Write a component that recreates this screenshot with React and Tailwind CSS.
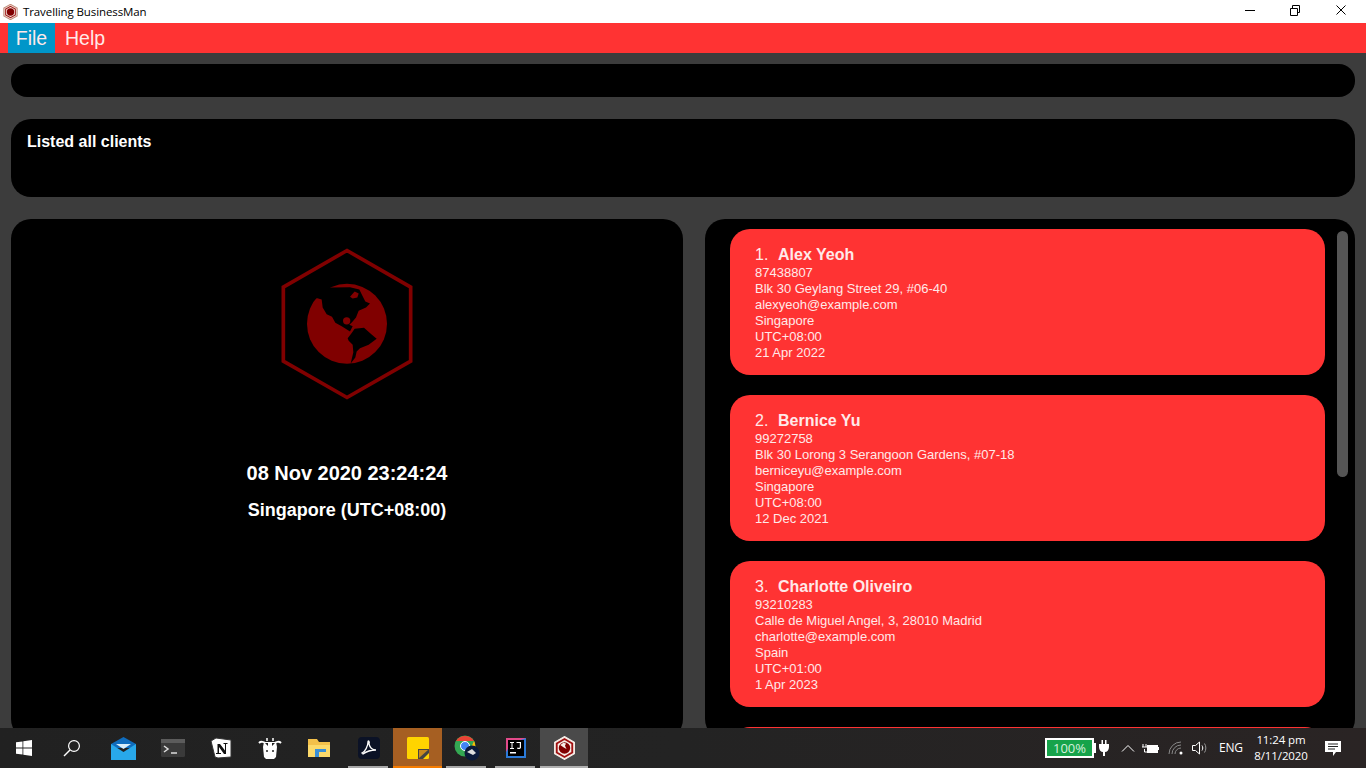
const sans = { fontFamily: '"Liberation Sans", Arial, sans-serif' };

const clients = [
  { n: 1, name: "Alex Yeoh", lines: ["87438807", "Blk 30 Geylang Street 29, #06-40", "alexyeoh@example.com", "Singapore", "UTC+08:00", "21 Apr 2022"] },
  { n: 2, name: "Bernice Yu", lines: ["99272758", "Blk 30 Lorong 3 Serangoon Gardens, #07-18", "berniceyu@example.com", "Singapore", "UTC+08:00", "12 Dec 2021"] },
  { n: 3, name: "Charlotte Oliveiro", lines: ["93210283", "Calle de Miguel Angel, 3, 28010 Madrid", "charlotte@example.com", "Spain", "UTC+01:00", "1 Apr 2023"] },
];

function Globe({ color = "#800000", land = "#000", className }) {
  return (
    <svg viewBox="60 37 402 461" className={className}>
      <polygon points="261,47 452,157 452,379 261,488 70,379 70,157" fill="none" stroke={color} strokeWidth="11" />
      <circle cx="261" cy="267" r="120" fill={color} />
      <path fill={land} d="M160,190 L172,190 L185,194 L188,218 L200,238 L216,246 L226,264 L245,274 L270,290 L278,274 L268,270 L276,262 L288,248 L296,228 L318,218 L330,206 L316,200 L308,184 L298,164 L270,157 L212,158 L190,160 Z" />
      <circle cx="260" cy="258" r="11" fill={color} />
      <path fill={color} d="M270,186 L284,170 L296,176 L292,188 L278,191 Z" />
      <path fill={land} d="M263,310 L274,296 L284,282 L312,279 L334,298 L350,312 L326,330 L300,340 L290,350 L286,368 L272,386 L280,352 L278,330 L266,318 Z" />
    </svg>
  );
}

function Slot({ children, className = "", bar = "" }) {
  return (
    <div className={`relative w-[49px] h-10 flex items-center justify-center shrink-0 ${className}`}>
      {children}
      {bar && <div className={`absolute bottom-0 h-0.5 ${bar}`} />}
    </div>
  );
}

function Card({ c }) {
  return (
    <div className="shrink-0 h-[146px] w-[595px] rounded-[20px] bg-[#ff3333] pl-[25px] pt-[16px] text-[#ffe9e9]">
      <div className="flex items-baseline h-[20px] text-[16px] leading-[19px]">
        <span className="w-[23px]">{c.n}.</span>
        <span className="font-bold">{c.name}</span>
      </div>
      {c.lines.map((l) => (
        <div key={l} className="text-[13px] leading-[16px]">{l}</div>
      ))}
    </div>
  );
}

export default function App() {
  return (
    <div className="w-[1366px] h-[768px] flex flex-col overflow-hidden bg-[#3c3c3c]" style={sans}>
      {/* Title bar */}
      <div className="h-[23px] bg-white flex items-center shrink-0 text-black">
        <div className="w-[23px] flex pl-[3px]">
          <svg viewBox="60 37 402 461" className="w-[15px] h-[16px]">
            <polygon points="261,47 452,157 452,379 261,488 70,379 70,157" fill="#f4e4dc" stroke="#c08a78" strokeWidth="30" />
            <polygon points="261,105 400,185 400,350 261,430 122,350 122,185" fill="#f4e4dc" stroke="#a01818" strokeWidth="30" />
            <circle cx="261" cy="267" r="105" fill="#800000" />
          </svg>
        </div>
        <span className="text-[11.5px] tracking-[-0.1px]" style={{ fontFamily: '"Open Sans", sans-serif' }}>Travelling BusinessMan</span>
        <div className="ml-auto flex items-center h-full">
          <svg width="38" height="23" viewBox="0 0 38 23"><path d="M5 10.500h10" stroke="#000" /></svg>
          <svg width="45" height="23" viewBox="0 0 45 23" fill="none" stroke="#000"><path d="M12.500 8.500h7v7h-7zM14.500 8.500v-3h7v7h-2" /></svg>
          <svg width="43" height="23" viewBox="0 0 43 23" fill="none" stroke="#000"><path d="M13.500 5.500l9 9M22.500 5.500l-9 9" /></svg>
        </div>
      </div>

      {/* Menu bar */}
      <div className="h-[30px] bg-[#ff3333] flex shrink-0 pl-2 text-[19.5px] text-[#ffe9e9]">
        <div className="w-[47px] bg-[#0096c9] flex items-center justify-center pt-px">File</div>
        <div className="px-[10px] flex items-center pt-px">Help</div>
      </div>

      {/* Main */}
      <div className="flex-1 min-h-0 overflow-hidden px-[11px] pt-[11px] flex flex-col">
        <div className="h-[33px] shrink-0 rounded-[16px] bg-black" />
        <div className="h-[78px] shrink-0 mt-[22px] rounded-[20px] bg-black px-4 pt-[13px] text-white font-bold text-[16px] leading-[20px]">
          Listed all clients
        </div>
        <div className="mt-[22px] flex gap-[22px] shrink-0 h-[520px]">
          <div className="w-[672px] rounded-[20px] bg-black flex flex-col items-center pt-[28px] text-white font-bold">
            <Globe className="w-[134px] h-[154px]" />
            <div className="mt-[60px] text-[20px] leading-[24px] tracking-[-0.02px]">08 Nov 2020 23:24:24</div>
            <div className="mt-[14px] text-[18px] leading-[22px]">Singapore (UTC+08:00)</div>
          </div>
          <div className="relative w-[650px] rounded-[20px] bg-black overflow-hidden pl-[25px] pt-[10px] flex flex-col gap-[20px]">
            {clients.map((c) => <Card key={c.n} c={c} />)}
            <div className="shrink-0 h-[146px] w-[595px] rounded-[20px] bg-[#ff3333]" />
            <div className="absolute left-[632px] top-[12px] w-[11px] h-[246px] rounded-md bg-[#555555]" />
          </div>
        </div>
      </div>

      {/* Taskbar */}
      <div className="h-10 shrink-0 bg-gradient-to-r from-[#212121] via-[#232323] to-[#2a2424] flex items-center relative z-10 text-white">
        <div className="w-12 h-10 flex items-center justify-center">
          <svg width="16" height="16" viewBox="0 0 16 16" fill="#fff"><path d="M0 2.300l6.500-.9v6.200H0zM7.300 1.300L16 0v7.600H7.300zM0 8.400h6.500v6.200L0 13.700zM7.300 8.400H16V16l-8.700-1.300z" /></svg>
        </div>
        <div className="w-12 h-10 flex items-center justify-center mr-[3px]">
          <svg width="18" height="18" viewBox="0 0 18 18" fill="none" stroke="#fff" strokeWidth="1.200"><circle cx="11" cy="7" r="5.400" /><path d="M7 11l-6 6" strokeWidth="1.500" /></svg>
        </div>
        <Slot>
          <svg width="25" height="23" viewBox="0 0 25 23"><path d="M0 7L12.500 0 25 7v4H0z" fill="#0f6cbd" /><path d="M0 7l12.500 8L25 7v16H0z" fill="#28a8ea" /><path d="M5 7h15l-7.500 5z" fill="#d8edf9" /></svg>
        </Slot>
        <Slot>
          <svg width="24" height="18" viewBox="0 0 24 18"><rect width="24" height="18" rx="1.500" fill="#3a3a3a" /><rect width="24" height="4" fill="#5c5c5c" /><path d="M3 7l4 3-4 3" stroke="#ddd" strokeWidth="1.500" fill="none" /><path d="M10 14h6" stroke="#ddd" strokeWidth="1.500" /></svg>
        </Slot>
        <Slot className="pr-[2px]">
          <svg width="22" height="22" viewBox="0 0 22 22"><path d="M1 4l4 16 3 1 13-1V3L6 1z" fill="#fff" stroke="#333" /><path d="M7 7h3l5 6.500V7h-1.500V6h4v1H16v10h-2L9 10v6h2v1H6v-1h1.500V7H7z" fill="#111" /></svg>
        </Slot>
        <Slot className="pr-[2px]">
          <svg width="24" height="24" viewBox="0 0 24 24"><path d="M1 7c2-2 5-1 6 0M23 7c-2-2-5-1-6 0" stroke="#fff" strokeWidth="2" fill="none" /><path d="M9 2v3M15 2v3" stroke="#fff" strokeWidth="1.500" /><path d="M6 6h12l1 5-1 10-2 2H8l-2-2-1-10z" fill="#fff" /><circle cx="9" cy="15" r="1" fill="#222" /><circle cx="15" cy="15" r="1" fill="#222" /><path d="M7 7l3 0 0 3zM17 7l-3 0 0 3z" fill="#222" /></svg>
        </Slot>
        <Slot className="pr-[2px]">
          <svg width="22" height="20" viewBox="0 0 22 20"><path d="M0 1h9l2 3h11v15H0z" fill="#f3c04a" /><path d="M0 7h22v12H0z" fill="#fcd96a" /><path d="M7 19v-8h11v3h-7v5z" fill="#3a8fd6" /></svg>
        </Slot>
        <Slot bar="left-[4px] w-[40px] bg-[#a8a8a8]">
          <svg width="22" height="22" viewBox="0 0 22 22"><rect width="22" height="22" rx="4" fill="#0b1226" /><path d="M4 16c3-1 6-7 6-11 0-2 2-1 1 2 1 4 3 6 7 6-4 0-9 1-13 4z" fill="none" stroke="#fff" strokeWidth="1.300" /></svg>
        </Slot>
        <Slot className="bg-[#a65f22]" bar="left-0 w-full bg-[#f57c00]">
          <svg width="22" height="22" viewBox="0 0 22 22"><rect width="22" height="22" rx="1.500" fill="#ffd400" /><path d="M11 22V12h11v4l-6 6z" fill="#444" /><path d="M12 21v-8h9z" fill="#c98a1e" /></svg>
        </Slot>
        <Slot bar="left-[4px] w-[40px] bg-[#a8a8a8]">
          <svg width="26" height="26" viewBox="0 0 26 26"><circle cx="11" cy="11" r="10.500" fill="#34a853" /><path d="M2 6a10.500 10.500 0 0 1 18 0h-9z" fill="#ea4335" /><path d="M20 6a10.500 10.500 0 0 1-6 15l3-8z" fill="#fbbc05" /><circle cx="11" cy="11" r="4.500" fill="#4285f4" stroke="#fff" /><circle cx="18" cy="18" r="7.500" fill="#0b1a3a" /><path d="M13 17l5-3 4 4-3 2z" fill="#ddd" /></svg>
        </Slot>
        <Slot bar="left-[4px] w-[40px] bg-[#a8a8a8]">
          <svg width="20" height="20" viewBox="0 0 20 20"><rect width="20" height="20" fill="#2b7ad8" /><path d="M0 0h20L12 3H3v6L0 14z" fill="#e34a8a" /><rect x="2" y="2" width="16" height="16" fill="#000" /><rect x="4" y="14" width="6" height="1.500" fill="#fff" /><path d="M4 4h4v1H6.500v5H8v1H4v-1h1.500V5H4zM10.500 4h4.500v5.500c0 1.500-2.500 2-4 1l.5-1c1 .5 2.300.5 2.300-.3V5h-3.300z" fill="#fff" /></svg>
        </Slot>
        <Slot className="bg-[#4a4a4a] !w-[48px]" bar="left-0 w-full bg-[#b0b0b0]">
          <svg viewBox="60 37 402 461" className="w-[21px] h-[24px]">
            <polygon points="261,47 452,157 452,379 261,488 70,379 70,157" fill="#f6eee8" stroke="#f6eee8" strokeWidth="20" />
            <polygon points="261,95 410,180 410,355 261,440 112,355 112,180" fill="none" stroke="#a01010" strokeWidth="36" />
            <circle cx="261" cy="267" r="110" fill="#800000" />
            <path d="M180 210l60-45 50 15-20 45 30 60-60-30z" fill="#f6eee8" />
          </svg>
        </Slot>

        {/* Tray */}
        <div className="ml-auto h-full flex items-center" style={{ fontFamily: '"Open Sans", sans-serif' }}>
          <div className="flex items-center">
            <div className="w-[49px] h-5 border-2 border-white bg-[#16a34a] flex items-center justify-center text-[13px] leading-none text-[#d6f0de]">100%</div>
            <div className="w-[2px] h-[10px] bg-white" />
          </div>
          <div className="ml-[3px] w-[10px]">
            <svg width="10" height="16" viewBox="0 0 10 16" fill="#fff"><path d="M2.500 0h1.500v4H6V0h1.500v4H10v3c0 3-2 5-4 5v4H4v-4c-2 0-4-2-4-5V4h2.500z" /></svg>
          </div>
          <div className="ml-[12px] w-[14px]">
            <svg width="14" height="8" viewBox="0 0 14 8" fill="none" stroke="#fff"><path d="M1 7.500l6-6 6 6" /></svg>
          </div>
          <div className="ml-[7px] w-[17px]">
            <svg width="17" height="11" viewBox="0 0 17 11"><rect x="5.500" y="2.500" width="10" height="7" fill="#fff" stroke="#fff" /><rect x="16" y="4" width="1" height="3" fill="#fff" /><path d="M1 1v3M4 1v3M0 4h5M2.500 6v3h3" stroke="#fff" fill="none" /></svg>
          </div>
          <div className="ml-[9px] w-[17px]">
            <svg width="17" height="14" viewBox="0 0 17 14" fill="none" stroke="#8a8a8a"><path d="M1 13a12 12 0 0 1 12-12M4 13a9 9 0 0 1 9-9M7 13a6 6 0 0 1 6-6" /><circle cx="13" cy="12" r="1.500" fill="#fff" stroke="none" /></svg>
          </div>
          <div className="ml-[7px] w-[16px]">
            <svg width="16" height="14" viewBox="0 0 16 14" fill="none" stroke="#fff"><path d="M.5 4.500h3L7.500 1v12l-4-3.500h-3z" /><path d="M10 4.500c1 1.500 1 3.500 0 5" /><path d="M12.500 2.500c1.800 2.500 1.800 6.500 0 9" stroke="#999" /></svg>
          </div>
          <div className="ml-[11px] text-[12px] w-[27px] tracking-[-0.2px]">ENG</div>
          <div className="ml-0 w-[70px] text-center text-[11.5px] leading-[16px] tracking-[-0.1px]">
            <div>11:24 pm</div>
            <div>8/11/2020</div>
          </div>
          <div className="ml-[9px] mr-[25px]">
            <svg width="16" height="15" viewBox="0 0 16 15"><path d="M0 0h16v11h-5l-3 4v-4H0z" fill="#fff" /><path d="M3 3h10M3 5.500h10M3 8h7" stroke="#222" /></svg>
          </div>
        </div>
      </div>
    </div>
  );
}
